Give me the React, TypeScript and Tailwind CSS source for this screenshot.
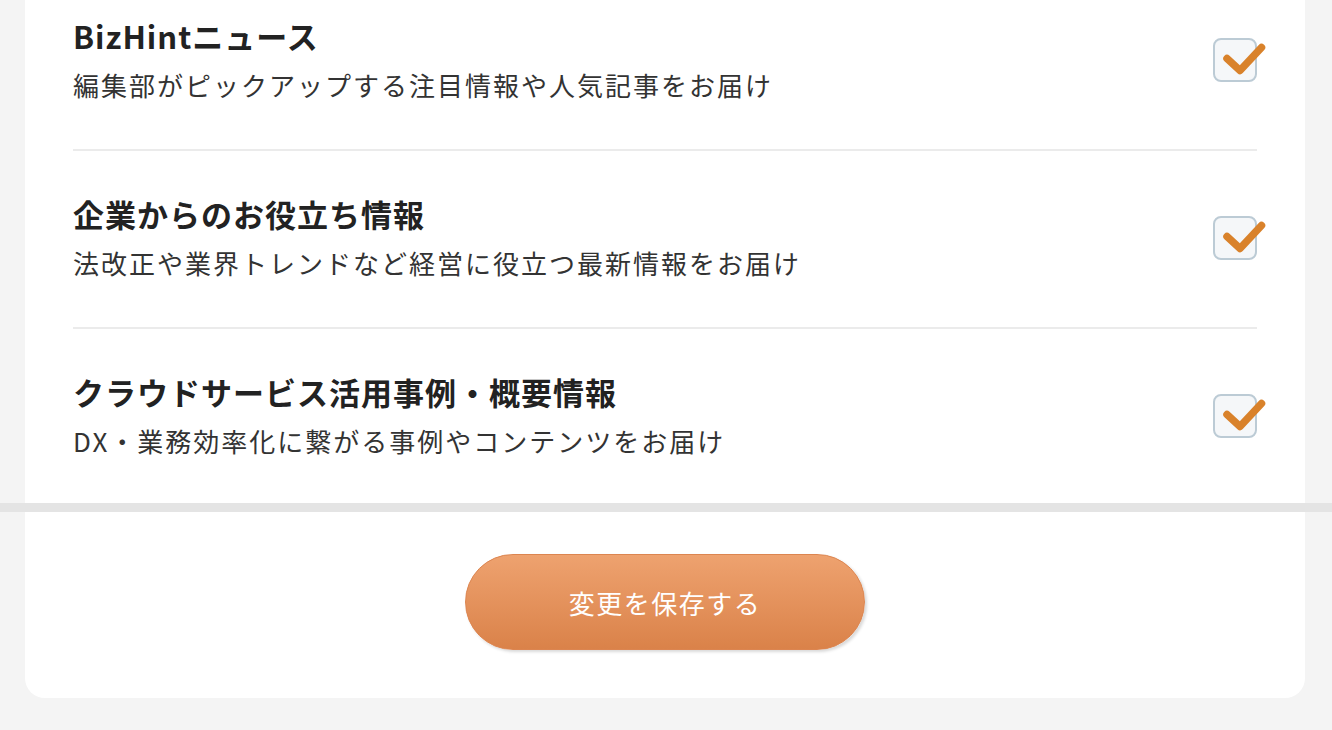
import React from "react";

const items = [
  { title: "BizHintニュース", desc: "編集部がピックアップする注目情報や人気記事をお届け" },
  { title: "企業からのお役立ち情報", desc: "法改正や業界トレンドなど経営に役立つ最新情報をお届け" },
  { title: "クラウドサービス活用事例・概要情報", desc: "DX・業務効率化に繋がる事例やコンテンツをお届け" },
];

function CheckBox() {
  return (
    <div className="relative w-[44px] h-[44px] shrink-0">
      <div className="w-full h-full rounded-[8px] border-2 border-[#bccbd5] bg-[#f5f7f9]" />
      <svg
        className="absolute left-0 top-0 overflow-visible"
        width="56"
        height="48"
        viewBox="0 0 56 48"
      >
        <path
          d="M14 20.5 L27 32.5 L48.5 9.5"
          fill="none"
          stroke="#d9822b"
          strokeWidth="7.5"
          strokeLinecap="round"
          strokeLinejoin="round"
        />
      </svg>
    </div>
  );
}

export default function App() {
  return (
    <div
      className="h-[730px] overflow-hidden bg-[#f4f4f4]"
      style={{ fontFamily: '"Noto Sans CJK JP", "Noto Sans", sans-serif' }}
    >
      <div className="ml-[25px] mr-[27px] bg-white px-[48px] -mt-[27px]">
        {items.map((it, i) => (
          <div
            key={it.title}
            className={
              i < items.length - 1
                ? "flex items-center justify-between pt-[43px] pb-[46px] border-b-2 border-[#ebebeb]"
                : "flex items-center justify-between pt-[43px] pb-[44px]"
            }
          >
            <div>
              <div className="text-[31px] leading-[40px] font-bold text-[#222] tracking-[1px]">{it.title}</div>
              <div className="mt-[11px] text-[26px] leading-[36px] text-[#333] tracking-[2px]">{it.desc}</div>
            </div>
            <CheckBox />
          </div>
        ))}
      </div>

      <div className="h-[9px] bg-[#e4e4e4]" />

      <div className="ml-[25px] mr-[27px] bg-white rounded-b-[20px] flex justify-center pt-[42px] pb-[48px]">
        <button className="w-[400px] h-[96px] rounded-full border border-[#dc8550] bg-gradient-to-b from-[#eea26f] to-[#da8249] text-white text-[26px] tracking-[1.5px] shadow-[2px_2px_3px_rgba(0,0,0,0.15)]">
          変更を保存する
        </button>
      </div>
    </div>
  );
}
